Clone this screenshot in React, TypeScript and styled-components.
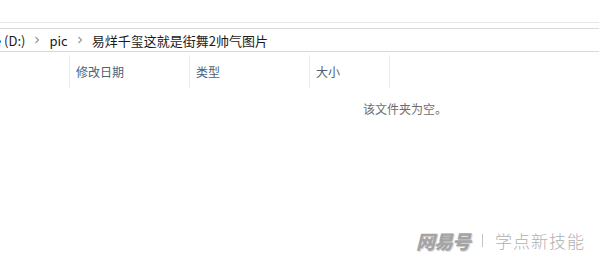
import React from "react";
import styled, { createGlobalStyle } from "styled-components";

const GlobalStyle = createGlobalStyle`
  html, body {
    margin: 0;
    padding: 0;
    background: #fff;
  }
  body {
    font-family: "Microsoft YaHei", "Noto Sans CJK SC", "Noto Sans", sans-serif;
  }
`;

const Window = styled.div`
  width: 599px;
  height: 264px;
  background: #fff;
  display: flex;
  flex-direction: column;
  overflow: hidden;
`;

const Ribbon = styled.div`
  height: 22px;
  border-bottom: 1px solid #e6e6e6;
`;

const Gap = styled.div`
  height: 5px;
`;

const AddressBar = styled.div`
  height: 22px;
  border-top: 1px solid #d9d9d9;
  border-bottom: 1px solid #d9d9d9;
  display: flex;
  align-items: center;
  margin-left: -8px;
  font-size: 13px;
  color: #1a1a1a;
  white-space: nowrap;
`;

const Crumb = styled.span`
  padding: 0 2px;
`;

const Chevron = styled.span`
  display: inline-flex;
  width: 20px;
  justify-content: center;
  svg {
    display: block;
  }
`;

const Header = styled.div`
  display: flex;
  height: 33px;
  margin-top: 3px;
  font-size: 12px;
  color: #4c607a;
`;

const Column = styled.div<{ $w: number }>`
  width: ${(p) => p.$w}px;
  flex-shrink: 0;
  display: flex;
  align-items: center;
  padding-left: 6px;
  box-sizing: border-box;
  border-right: 1px solid #ececec;
  &:first-child {
    padding-left: 0;
  }
`;

const Body = styled.div`
  flex: 1;
  display: flex;
  flex-direction: column;
  position: relative;
`;

const Empty = styled.div`
  margin-top: 12px;
  padding-left: 363px;
  font-size: 12px;
  color: #6d6d6d;
`;

const Watermark = styled.div`
  position: absolute;
  right: 14px;
  bottom: 10px;
  display: flex;
  align-items: center;
  gap: 12px;
  color: #b0b0b0;
  font-size: 17px;
  letter-spacing: 1px;
`;

const Brand = styled.span`
  font-size: 19px;
  font-weight: 900;
  font-style: italic;
  color: #a4a4a4;
  text-shadow: 1px 1px 0 #dcdcdc;
  letter-spacing: -1px;
`;

const Sep = styled.span`
  width: 1px;
  height: 13px;
  background: #c4c4c4;
`;

const Slogan = styled.span`
  font-weight: 300;
  color: #b0b0b0;
`;

function Arrow() {
  return (
    <svg width="6" height="8" viewBox="0 0 6 8">
      <path d="M1.5 1 L4.5 4 L1.5 7" fill="none" stroke="#9a9a9a" strokeWidth="1.2" />
    </svg>
  );
}

export default function App() {
  return (
    <Window>
      <GlobalStyle />
      <Ribbon />
      <Gap />
      <AddressBar>
        <Crumb>e (D:)</Crumb>
        <Chevron>
          <Arrow />
        </Chevron>
        <Crumb>pic</Crumb>
        <Chevron>
          <Arrow />
        </Chevron>
        <Crumb>易烊千玺这就是街舞2帅气图片</Crumb>
      </AddressBar>
      <Header>
        <Column $w={70} />
        <Column $w={120}>修改日期</Column>
        <Column $w={120}>类型</Column>
        <Column $w={80}>大小</Column>
      </Header>
      <Body>
        <Empty>该文件夹为空。</Empty>
        <Watermark>
          <Brand>网易号</Brand>
          <Sep />
          <Slogan>学点新技能</Slogan>
        </Watermark>
      </Body>
    </Window>
  );
}
